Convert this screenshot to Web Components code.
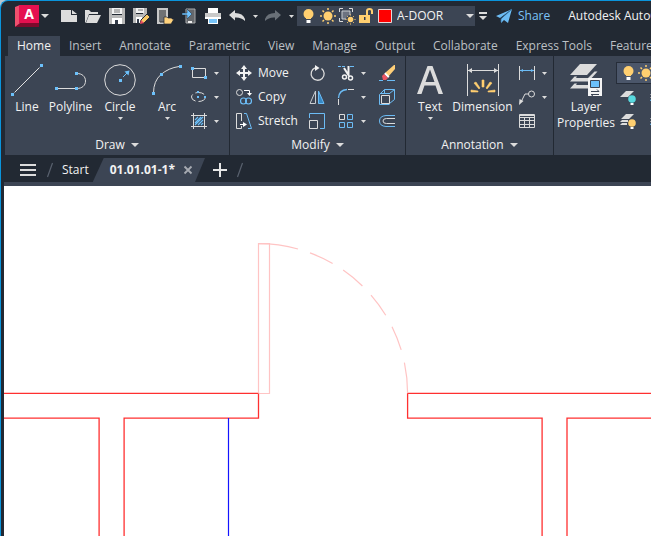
<!DOCTYPE html>
<html lang="en">
<head>
<meta charset="utf-8">
<title>Autodesk AutoCAD</title>
<style>
html,body{height:100%;margin:0}
body{background:#b9c6d0;font:12px/16px "Open Sans","Noto Sans",sans-serif;color:#f2f2f2;overflow:hidden}
</style>
</head>
<body>
<cad-window></cad-window>
<script>
const ICONS = {
logo:[24,22,'<path d="M0 2L5 0V20L0 22z" fill="#f0506e"/><path d="M4 0h20v18H4z" fill="#e51050"/><path d="M5 18h19v4H0z" fill="#7d0a2c"/><text x="14" y="14" text-anchor="middle" font-size="14" font-weight="700" fill="#fff" font-family="Open Sans,sans-serif">A</text>'],
caret:[8,4,'<path d="M0 0h8L4 4z" fill="#dcdcdc"/>'],
scaret:[5,3,'<path d="M0 0h5L2.500 3z" fill="#dcdcdc"/>'],
barcaret:[8,8,'<path d="M0 0h8v2H0zM0 4h8L4 8z" fill="#dcdcdc"/>'],
new:[16,12,'<path d="M0 0h10v5h6v7H0zM11 0l5 4h-5z" fill="#dcdcdc"/>'],
open:[16,13,'<path d="M0 13V0h4l2 2h7v2H4L1 12z" fill="#dcdcdc"/><path d="M4 5h12l-4 8H1z" fill="#dcdcdc"/>'],
save:[16,16,'<path d="M0 0h3v7h10V0h3v16H0z" fill="#b8b8b8"/><path d="M3 0h10v6H3z" fill="#f2f2f2"/><path d="M5 2h6M5 4h6" stroke="#777"/><path d="M3 10h10v6H3z" fill="#fff"/><path d="M6 12h3v4H6z" fill="#333b49"/>'],
saveas:[16,16,'<path d="M0 0h3v6h7V0h4v9l-7 6H0z" fill="#b8b8b8"/><path d="M3 0h8v5H3z" fill="#f2f2f2"/><path d="M5 2h5" stroke="#777"/><path d="M3 9h6v6H3z" fill="#fff"/><path d="M4 11h2v4H4z" fill="#333b49"/><path d="M7 16l1-4 6-6 3 3-6 6z" fill="#f8c866" stroke="#222933"/><path d="M7 16l1-4 3 3z" fill="#ee4a62"/>'],
mopen:[16,16,'<path d="M1 1h9v14H1z" fill="#707274" stroke="#c8c8c8" stroke-width="2"/><path d="M3 14h4" stroke="#333"/><path d="M7 16V9h3l1 1h4v1h2l-3 5z" fill="#ffd27c" stroke="#222933" stroke-width=".7"/>'],
msave:[14,16,'<path d="M4 1h9v14H4z" fill="#65686c" stroke="#a8aaac"/><path d="M6 14h4" stroke="#eee" stroke-width="2"/><path d="M0 5h5V1l5 5-5 5V7H0z" fill="#6ec2ff" stroke="#222933" stroke-width=".5"/>'],
print:[16,16,'<path d="M3 0h10v5H3z" fill="#fff"/><path d="M0 5h16v6H0z" fill="#c9c9c9"/><path d="M0 10h16" stroke="#fff" stroke-width="2"/><path d="M3 9h10v7H3z" fill="#fff"/><path d="M4 11h8v4H4z" fill="#79c6fb"/>'],
undo:[16,12,'<path d="M0 5L6 0v3q8 0 10 6v2Q12 7 6 7.500v3z" fill="#dcdcdc"/>'],
redo:[16,12,'<path d="M16 5L10 0v3Q2 3 0 9v2q4-4 10-3.500v3z" fill="#697078"/>'],
bulb:[11,14,'<circle cx="5.500" cy="5" r="5" fill="#ffcf70"/><path d="M3 8h5v2H3z" fill="#ffcf70"/><path d="M3.500 11h4v3h-4z" fill="#fff"/>'],
sun:[16,16,'<circle cx="8" cy="8" r="4.500" fill="#ffcf70"/><path d="M8 0v2M8 14v2M0 8h2M14 8h2M2.500 2.500L4 4M12 12l1.500 1.500M2.500 13.500L4 12M12 4l1.500-1.500" stroke="#ffcf70" stroke-width="1.500"/>'],
freeze:[16,16,'<path d="M3 3h8v8H3z" fill="#6b7280" stroke="#c8ccd0"/><path d="M.5 4V.5H4M10 .5h3.500V4M.5 10v3.500H4" fill="none" stroke="#dcdcdc"/><circle cx="11.500" cy="11.500" r="4.500" fill="#3c4554"/><circle cx="11.500" cy="11.500" r="2.800" fill="#ffcf70"/><path d="M11.500 6.500v1M11.500 15.500v1M6.500 11.500h1M15.500 11.500h1M8 8l.8.800M15 8l-.8.800M8 15l.8-.8M15 15l-.8-.8" stroke="#ffcf70"/>'],
lock:[14,16,'<path d="M0 7h11v8H0z" fill="#ffcf70"/><path d="M8 7V3q0-2 2.500-2T13 3v3" fill="none" stroke="#ffcf70" stroke-width="2"/><path d="M5 9h1.500v3H5z" fill="#333b49"/>'],
swatch:[14,14,'<path d="M.5.500h13v13H.5z" fill="#f00" stroke="#e8d8d8"/>'],
share:[16,14,'<path d="M16 0L0 7l4 2zM16 0L5 10v4l3-3 4 3z" fill="#6cbcf5"/><path d="M16 0L5 9.500V13" fill="none" stroke="#2b6b9c" stroke-width=".7"/>'],
line:[32,32,'<path d="M3.500 28.500l25-25" stroke="#e2e2e2"/><path d="M0 29h3v3H0zM29 0h3v3h-3z" fill="#6cc0fa"/>'],
polyline:[32,32,'<path d="M3 24.500h18M22 9.500c5 0 8.500 3 8.500 7.500s-3.500 7.500-8.500 7.500" fill="none" stroke="#dcdcdc"/><path d="M0 23h3v3H0zM20 23h3v3h-3zM20 8h3v3h-3z" fill="#6cc0fa"/>'],
circle:[32,32,'<circle cx="16" cy="16" r="15.300" fill="none" stroke="#dcdcdc"/><path d="M15 15h3v3h-3z" fill="#6cc0fa"/><path d="M19 13l4-4" stroke="#6cc0fa"/><path d="M25.500 6.500l-1 5-4-4z" fill="#6cc0fa"/>'],
arc:[32,32,'<path d="M2.500 29Q2.500 17 10 10.500T28 2.500" fill="none" stroke="#dcdcdc"/><path d="M1 28h3v3H1zM9 9h3v3H9zM28 1h3v3h-3z" fill="#6cc0fa"/>'],
rect:[16,16,'<path d="M1.500 3.500h13v9h-13z" fill="none" stroke="#dcdcdc"/><path d="M0 2h3v3H0zM13 11h3v3h-3z" fill="#6cc0fa"/>'],
ellipse:[16,16,'<ellipse cx="7.500" cy="8" rx="7" ry="4.500" fill="none" stroke="#dcdcdc" stroke-dasharray="9 3"/><path d="M6 7h2v2H6zM6 2h2v2H6zM13 7h2v2h-2z" fill="#6cc0fa"/>'],
hatch:[16,16,'<path d="M0 2.500h16M0 13.500h16M2.500 0v16M13.500 0v16" stroke="#dcdcdc"/><path d="M4 7l3-3M4 10l6-6M4 12l8-8M7 12l5-5M10 12l2-2" stroke="#6cc0fa" stroke-width="1.200"/>'],
move:[16,16,'<path d="M8 2v12M2 8h12" stroke="#f2f2f2" stroke-width="2"/><path d="M8 0l3 4H5zM8 16l3-4H5zM0 8l4-3v6zM16 8l-4-3v6z" fill="#f2f2f2"/>'],
copy:[16,16,'<circle cx="3.500" cy="3.500" r="3" fill="none" stroke="#dcdcdc"/><path d="M8 1.500h5.500V5" fill="none" stroke="#fff"/><path d="M11 4h5l-2.500 3z" fill="#fff"/><circle cx="7.500" cy="12" r="3" fill="none" stroke="#6cbcf5" stroke-width="1.200"/><circle cx="12.500" cy="12" r="3" fill="none" stroke="#6cbcf5" stroke-width="1.200"/>'],
stretch:[16,16,'<path d="M5.500 8V.5h-5v15h5V13" fill="none" stroke="#dcdcdc"/><path d="M8 .5h2.500l5 15H12" fill="none" stroke="#6cbcf5"/><path d="M4 11.500h5" stroke="#fff"/><path d="M7 9l4 2.500L7 14z" fill="#fff"/>'],
rotate:[16,16,'<path d="M12.500 3.500A6.500 6.500 0 1 1 6 2.800" fill="none" stroke="#dcdcdc" stroke-width="1.300"/><path d="M6 0l4.500 3L6 6z" fill="#f2f2f2"/>'],
mirror:[16,16,'<path d="M6.500 2v12.500H1z" fill="none" stroke="#c8ccd0"/><path d="M9.500 2v12.500H15z" fill="#3688c4" stroke="#6cbcf5"/>'],
scale:[16,16,'<path d="M.5 5V.5h15v15H11" fill="none" stroke="#6cbcf5"/><path d="M.5 7.500h8v8h-8z" fill="none" stroke="#dcdcdc"/>'],
trim:[16,16,'<path d="M0 1.500h7" stroke="#6cbcf5" stroke-dasharray="3 1"/><path d="M12 1.500h4" stroke="#6cbcf5"/><path d="M6 3l5 8M10.500 1v9" stroke="#f2f2f2" stroke-width="2"/><circle cx="6.500" cy="12" r="2" fill="none" stroke="#f2f2f2" stroke-width="1.500"/><circle cx="12.500" cy="13" r="2" fill="none" stroke="#f2f2f2" stroke-width="1.500"/>'],
fillet:[16,16,'<path d="M.5 9Q1 1 9 .5" fill="none" stroke="#6cbcf5" stroke-width="1.300"/><path d="M10 .5h6M.5 10v6" stroke="#dcdcdc"/>'],
array:[16,16,'<path d="M1.500 1.500h5v5h-5z" fill="none" stroke="#dcdcdc"/><path d="M9.500 1.500h5v5h-5zM1.500 9.500h5v5h-5zM9.500 9.500h5v5h-5z" fill="none" stroke="#6cbcf5"/>'],
erase:[16,16,'<path d="M0 15.500h4M8 15.500h8" stroke="#6cbcf5"/><path d="M6 8L15 0h1v4L9 12z" fill="#ffcf78"/><path d="M5 9l1.500-1.500 4 4L9 13z" fill="#fff"/><path d="M3 11l2-2 4 4-2 2H4z" fill="#ee5563"/>'],
box:[16,16,'<path d="M.5 5.500l5-5h10v10l-5 4M5.500.500v4M15.500.500l-5 4M1 4.500h10" fill="none" stroke="#6cbcf5"/><path d="M2.500 6.500h8v8h-8z" fill="none" stroke="#dcdcdc"/><path d="M.5 5.500v10h10" fill="none" stroke="#6cbcf5"/>'],
offset:[16,16,'<path d="M16 2.500H7Q.5 3 .5 8T7 13.500h9" fill="none" stroke="#6cbcf5"/><path d="M16 5.500H7.500Q4 5.500 4 8t3.500 2.500H16" fill="none" stroke="#dcdcdc"/>'],
text:[32,32,'<path d="M3 30L13.500 2h5L29 30h-4.500l-3-8.500h-11L7.500 30zM11.500 18h9L16 5.500z" fill="#dcdcdc"/>'],
dimension:[32,32,'<path d="M.5 0v32M31.500 0v32M1 6.500h30" stroke="#dcdcdc"/><path d="M1 6.500L5 4v5zM31 6.500L27 4v5z" fill="#dcdcdc"/><path d="M15 16h2v7h-2zM7 19l2-1 4 6-1 1zM25 19l-2-1-4 6 1 1zM4 28v-2l7 1v1zM28 28v-2l-7 1v1z" fill="#ffcf70" stroke="#ffcf70" stroke-width=".6"/>'],
dim:[16,16,'<path d="M.5 1v14M15.500 1v14" stroke="#dcdcdc"/><path d="M1 5.500h14" stroke="#6cbcf5"/><path d="M1 5.500L4 4v3zM15 5.500L12 4v3z" fill="#6cbcf5"/>'],
leader:[16,16,'<circle cx="12.500" cy="5" r="3" fill="none" stroke="#dcdcdc"/><path d="M9.500 5H6L2 13" fill="none" stroke="#dcdcdc"/><path d="M0 16l.5-6L4.500 12z" fill="#dcdcdc"/>'],
table:[16,16,'<path d="M.5 1.500h15v13H.5zM.5 4.500h15M.5 7.500h15M.5 11.500h15M5.500 5v9M10.500 5v9M0 2.500h16" fill="none" stroke="#dcdcdc"/>'],
layers:[32,32,'<path d="M10 0h17L17 11H0z" fill="#dcdcdc"/><path d="M0 17.500l4.500-5h2.500l-1 1.500h12l6.500-6.500h3l-9 10zM0 24.500l4.500-5h2.500l-1 1.500h12v3.500z" fill="#dcdcdc"/><path d="M18 14h14v18H18z" fill="#f4f4f4"/><path d="M20.500 16.500h9v7h-9z" fill="#6cc0fa" stroke="#3c4554"/><path d="M21 27.500h8M21 30.500h8M27 25.500l2 2M23 32l-2-1.500" stroke="#3c4554"/>'],
layoff:[16,16,'<path d="M6 2h8L8 8H0z" fill="#dcdcdc"/><circle cx="12" cy="10" r="3.800" fill="#58d8de"/><path d="M10.500 14h3v2h-3z" fill="#fff"/>'],
layon:[16,16,'<path d="M6 1h8L9 6H1zM0 9l2-2h6v2zM0 12l2-2h5v2z" fill="#dcdcdc"/><circle cx="12" cy="10" r="3.800" fill="#ffcf70"/><path d="M10.500 14h3v2h-3z" fill="#fff"/>'],
layblue:[16,16,'<path d="M5 1h9L9 6H0zM0 9l2-2h10v2z" fill="#dcdcdc"/><path d="M0 12l1-2h12v2z" fill="#6cc0fa"/>'],
menu:[16,12,'<path d="M0 1h16M0 6h16M0 11h16" stroke="#dcdcdc" stroke-width="2"/>'],
slash:[6,14,'<path d="M.5 14L5.500 0" stroke="#59616e" stroke-width="1.200"/>'],
close:[8,8,'<path d="M.5.500l7 7M7.500.500l-7 7" stroke="#a7abb2" stroke-width="1.800"/>'],
plus:[14,14,'<path d="M7 0v14M0 7h14" stroke="#e6e6e6" stroke-width="2"/>']
};
const BASE = `*{box-sizing:border-box}button,a,select{font:inherit;color:inherit;background:none;border:0;margin:0;padding:0;text-decoration:none;white-space:nowrap}`;
function define(name, css, html){
  customElements.define(name, class extends HTMLElement{
    constructor(){
      super();
      const a = k => this.getAttribute(k) || '';
      this.attachShadow({mode:'open'}).innerHTML = `<style>${BASE}${css}</style>` + (typeof html==='function' ? html(a) : html);
    }
  });
}
customElements.define('cad-icon', class extends HTMLElement{
  connectedCallback(){
    if(this.shadowRoot) return;
    const [w,h,body] = ICONS[this.getAttribute('name')];
    this.attachShadow({mode:'open'}).innerHTML = `<style>:host{display:block;flex:none}svg{display:block;overflow:visible}</style><svg width="${w}" height="${h}" viewBox="0 0 ${w} ${h}" aria-hidden="true">${body}</svg>`;
  }
});
define('icon-button', `:host{display:block;flex:none}button{display:grid;place-items:center;width:var(--w,24px);height:24px}`,
  a=>`<button aria-label="${a('label')}"><cad-icon name="${a('icon')}"></cad-icon></button>`);
define('text-button', `:host{display:block;flex:none}button{display:flex;align-items:center;gap:6px;height:24px}`,
  a=>`<button><cad-icon name="${a('icon')}"></cad-icon><slot></slot></button>`);
define('large-button', `:host{display:block;flex:none}button{display:flex;flex-direction:column;align-items:center;width:var(--w);line-height:16px}
  span{margin:3px 0 2px}`,
  a=>`<button><cad-icon name="${a('icon')}"></cad-icon><span><slot></slot></span>${a('menu')?'<cad-icon name="scaret"></cad-icon>':''}</button>`);
define('layer-select', `:host{display:flex;flex:none;align-items:center;background:#3c4554;height:20px;width:178px;padding-left:2px;--w:19px}
  .pick{flex:1;display:grid;align-items:center;min-width:0}
  select,cad-icon{grid-area:1/1}select{appearance:none;height:20px;padding-left:3px;outline:0}option{color:#222}
  cad-icon{justify-self:end;margin-right:1px;pointer-events:none}`,
  `<icon-button icon="bulb" label="On"></icon-button><icon-button icon="sun" label="Freeze"></icon-button><icon-button icon="freeze" label="Viewport freeze"></icon-button><icon-button icon="lock" label="Lock"></icon-button><icon-button icon="swatch" label="Colour"></icon-button>
  <div class="pick"><select aria-label="Layer"><option>A-DOOR</option></select><cad-icon name="caret"></cad-icon></div>`);
define('title-bar', `:host{display:flex;align-items:center;height:30px;padding-left:11px;white-space:nowrap}
  .s{--w:12px}.menu{margin-right:6px}.m{--w:16px}text-button{color:#7cc4f7;margin:0 18px 0 5px}`,
  `<icon-button icon="logo" label="Application menu"></icon-button><icon-button class="s menu" icon="caret" label="Menu"></icon-button>
  <icon-button icon="new" label="New"></icon-button><icon-button icon="open" label="Open"></icon-button><icon-button icon="save" label="Save"></icon-button><icon-button icon="saveas" label="Save as"></icon-button><icon-button icon="mopen" label="Open from mobile"></icon-button><icon-button icon="msave" label="Save to mobile"></icon-button><icon-button icon="print" label="Plot"></icon-button><icon-button icon="undo" label="Undo"></icon-button><icon-button class="s" icon="scaret" label="Undo list"></icon-button><icon-button icon="redo" label="Redo"></icon-button><icon-button class="s" icon="scaret" label="Redo list"></icon-button>
  <layer-select></layer-select><icon-button class="m" icon="barcaret" label="Customize"></icon-button><text-button icon="share">Share</text-button><span>Autodesk AutoCAD</span>`);
define('ribbon-tab', `:host{display:block;flex:none;color:#bcc0c5}a{display:block;height:20px;line-height:20px;padding:0 9px}:host([active]){background:#3c4554;color:#f2f2f2}`,
  `<a href="#"><slot></slot></a>`);
define('ribbon-tabs', `:host{display:flex;padding:5px 0 0 4px;overflow:hidden}`,
  `<ribbon-tab active>Home</ribbon-tab>` + ['Insert','Annotate','Parametric','View','Manage','Output','Collaborate','Express Tools','Featured Apps'].map(t=>`<ribbon-tab>${t}</ribbon-tab>`).join(''));
define('ribbon-panel', `:host{display:flex;flex:none;flex-direction:column;border-right:1px solid #222933;height:99px;padding-top:5px}
  .body{display:flex;height:76px}button{display:flex;align-items:center;justify-content:center;gap:6px;height:16px}`,
  a=>`<div class="body"><slot></slot></div>` + (a('label')?`<button>${a('label')}<cad-icon name="caret"></cad-icon></button>`:''));
define('tool-grid', `:host{display:grid;grid-auto-rows:24px;grid-template-columns:var(--cols);align-content:start}`, `<slot></slot>`);
define('cad-ribbon', `:host{display:flex;margin-left:1px;background:#3c4554;overflow:hidden}
  large-button{margin-top:3px}.s{--w:10px}.i{--w:16px}
  .draw{--cols:24px 10px;margin:0 8px 0 1px}.mod{--cols:73px 29px 20px 21px 16px;padding:0 10px 0 6px}.ann{--cols:24px 10px;margin:0 4px}
  .lay{margin-left:-2px;display:grid;grid-auto-rows:24px;grid-template-columns:30px 24px}
  .combo{grid-column:1/3;display:flex;align-items:center;height:22px;width:180px;margin-top:1px;padding-left:2px;background:#4b566a;border:1px solid #262d39;--w:18px}`,
  `<ribbon-panel label="Draw"><large-button icon="line" style="--w:44px">Line</large-button><large-button icon="polyline" style="--w:43px">Polyline</large-button><large-button icon="circle" menu="1" style="--w:56px">Circle</large-button><large-button icon="arc" menu="1" style="--w:38px">Arc</large-button>
  <tool-grid class="draw">${['rect','ellipse','hatch'].map(i=>`<icon-button icon="${i}" label="${i}"></icon-button><icon-button class="s" icon="scaret" label="${i} options"></icon-button>`).join('')}</tool-grid></ribbon-panel>
  <ribbon-panel label="Modify"><tool-grid class="mod">${[['Move','rotate','trim','erase'],['Copy','mirror','fillet','box'],['Stretch','scale','array','offset']].map(([t,a,b,c])=>`<text-button icon="${t.toLowerCase()}">${t}</text-button><icon-button class="i" icon="${a}" label="${a}"></icon-button><icon-button class="i" icon="${b}" label="${b}"></icon-button><icon-button class="s" icon="scaret" label="${b} options"></icon-button><icon-button class="i" icon="${c}" label="${c}"></icon-button>`).join('')}</tool-grid></ribbon-panel>
  <ribbon-panel label="Annotation"><large-button icon="text" menu="1" style="--w:48px">Text</large-button><large-button icon="dimension" style="--w:57px">Dimension</large-button>
  <tool-grid class="ann"><icon-button icon="dim" label="Linear"></icon-button><icon-button class="s" icon="scaret" label="Dimension types"></icon-button><icon-button icon="leader" label="Leader"></icon-button><icon-button class="s" icon="scaret" label="Leader options"></icon-button><icon-button icon="table" label="Table"></icon-button></tool-grid></ribbon-panel>
  <ribbon-panel><large-button icon="layers" style="--w:64px">Layer<br>Properties</large-button><div class="lay"><div class="combo"><icon-button icon="bulb" label="On"></icon-button><icon-button icon="sun" label="Freeze"></icon-button></div><icon-button icon="layoff" label="Off"></icon-button><icon-button icon="layblue" label="Isolate"></icon-button><icon-button icon="layon" label="All on"></icon-button><icon-button icon="layblue" label="Unisolate"></icon-button></div></ribbon-panel>`);
define('file-tabs', `:host{display:flex;align-items:center;height:24px;margin-top:3px;padding-left:12px}
  .start{margin:0 4px 0 9px}
  .tab{display:flex;align-items:center;height:24px;gap:8px;padding:0 12px 0 17px;background:#3c4554;clip-path:polygon(11px 0,100% 0,calc(100% - 10px) 100%,0 100%);font-weight:700}
  .close{--w:10px}.menu{margin-right:7px}.plus{margin:0 5px 0 3px}`,
  `<icon-button class="menu" icon="menu" label="Menu"></icon-button><cad-icon name="slash"></cad-icon><a class="start" href="#">Start</a><div class="tab"><a href="#">01.01.01-1*</a><icon-button class="close" icon="close" label="Close"></icon-button></div><icon-button class="plus" icon="plus" label="New drawing"></icon-button><cad-icon name="slash"></cad-icon>`);
define('drawing-canvas', `:host{display:block;flex:1;min-height:0;border-top:4px solid #3c4554;background:#fff}svg{display:block;width:100%;height:100%}`,
  `<svg role="img" aria-label="Floor plan with a door"><g fill="none" stroke="#ff3030" stroke-width="1.300">
  <path d="M0 207.300H254.500V232.100H120.100V900M0 232.100H95.100V900"/><path d="M4000 207.300H403.600V232.100H538.100V900M4000 232.100H563V900"/></g>
  <path d="M224.500 232V900" stroke="#1414ff" stroke-width="1.200"/>
  <g fill="none" stroke="#ffc4c4" stroke-width="1.200"><path d="M254.500 207V57.700H265.500V207.500H254.500"/>
  <path d="M254.500 57.700A149 149.600 0 0 1 403.600 207.300" stroke-dasharray="40 12.600 25 12.400 25 12.500 25 13 25 13 60"/></g></svg>`);
define('cad-window', `:host{box-sizing:border-box;display:flex;flex-direction:column;height:100vh;padding-left:3px;border-left:1px solid #0a94dc;border-top:1px solid #0a94dc;border-top-left-radius:8px;background:#222933;overflow:hidden}`,
  `<title-bar></title-bar><ribbon-tabs></ribbon-tabs><cad-ribbon></cad-ribbon><file-tabs></file-tabs><drawing-canvas></drawing-canvas>`);
</script>
</body>
</html>
